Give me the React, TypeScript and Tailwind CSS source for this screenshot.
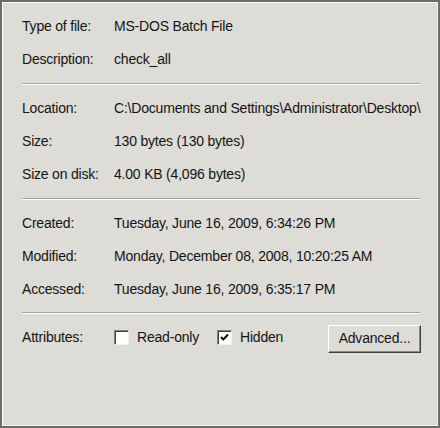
import React from "react";

type Row = {
  label: string;
  value: string;
};

const general: Row[] = [
  { label: "Type of file:", value: "MS-DOS Batch File" },
  { label: "Description:", value: "check_all" },
];

const where: Row[] = [
  { label: "Location:", value: "C:\\Documents and Settings\\Administrator\\Desktop\\" },
  { label: "Size:", value: "130 bytes (130 bytes)" },
  { label: "Size on disk:", value: "4.00 KB (4,096 bytes)" },
];

const dates: Row[] = [
  { label: "Created:", value: "Tuesday, June 16, 2009, 6:34:26 PM" },
  { label: "Modified:", value: "Monday, December 08, 2008, 10:20:25 AM" },
  { label: "Accessed:", value: "Tuesday, June 16, 2009, 6:35:17 PM" },
];

function InfoRow({ label, value }: Row) {
  return (
    <div className="flex h-[33px] items-center leading-[33px] whitespace-nowrap">
      <span className="w-[92px] shrink-0">{label}</span>
      <span>{value}</span>
    </div>
  );
}

function Separator() {
  return (
    <div className="flex flex-col">
      <div className="h-px bg-[#a3a29c]" />
      <div className="h-px bg-white" />
    </div>
  );
}

function Checkbox({ checked, label }: { checked?: boolean; label: string }) {
  return (
    <div className="flex items-center gap-[8px]">
      <div className="w-[15px] h-[15px] border border-t-[#808080] border-l-[#808080] border-r-[#f0f0f0] border-b-[#f0f0f0] shadow-[inset_1px_1px_0_#404040] bg-white flex items-center justify-center">
        {checked && (
          <svg width="11" height="11" viewBox="0 0 11 11">
            <path d="M2 5 L4.3 7.5 L9 2.5" fill="none" stroke="#111" strokeWidth="2" />
          </svg>
        )}
      </div>
      <span>{label}</span>
    </div>
  );
}

export default function App() {
  return (
    <div
      className="w-[440px] h-[428px] bg-[#dddcd6] border-2 border-[#6c6c6a] text-[14px] tracking-[-0.2px] text-[#141414]"
      style={{ fontFamily: '"Liberation Sans", Arial, sans-serif' }}
    >
      <div className="w-full h-full border border-white border-r-[#f4f4f0] border-b-[#f4f4f0] pl-[19px] pr-[17px] pt-[7px]">
        {general.map((r) => (
          <InfoRow key={r.label} {...r} />
        ))}
        <div className="my-[7px]">
          <Separator />
        </div>
        {where.map((r) => (
          <InfoRow key={r.label} {...r} />
        ))}
        <div className="my-[7px]">
          <Separator />
        </div>
        {dates.map((r) => (
          <InfoRow key={r.label} {...r} />
        ))}
        <div className="mt-[6px] mb-[7px]">
          <Separator />
        </div>
        <div className="flex h-[33px] items-center whitespace-nowrap">
          <span className="w-[92px] shrink-0">Attributes:</span>
          <div className="flex items-center gap-[18px]">
            <Checkbox label="Read-only" />
            <Checkbox checked label="Hidden" />
          </div>
          <button className="ml-auto mr-[-1px] mt-[2px] w-[93px] h-[28px] bg-[#dddcd6] border border-t-white border-l-white border-r-[#404040] border-b-[#404040] shadow-[inset_-1px_-1px_0_#8a8a86] text-[#141414]">
            Advanced...
          </button>
        </div>
      </div>
    </div>
  );
}
